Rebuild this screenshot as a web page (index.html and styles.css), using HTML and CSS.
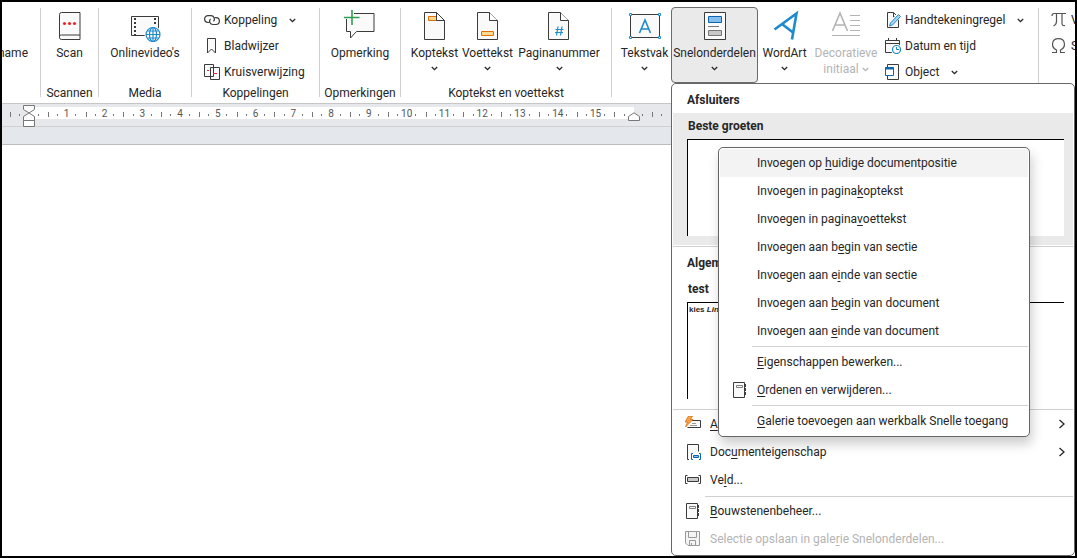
FILE: index.html
```html
<!DOCTYPE html>
<html lang="nl">
<head>
    <meta charset="UTF-8">
    <meta name="viewport" content="width=device-width, initial-scale=1.0">
    <title>Snelonderdelen</title>
    <link rel="stylesheet" href="styles.css">
</head>
<body>
    <svg class="defs" aria-hidden="true">
        <symbol id="chevron" viewBox="0 0 7 5"><path d="M.8 1l2.7 2.7L6.2 1" fill="none" stroke="currentColor" stroke-width="1.3"/></symbol>
        <symbol id="arrow" viewBox="0 0 8 10"><path d="M1.5 1l4.5 4-4.5 4" fill="none" stroke="currentColor" stroke-width="1.3"/></symbol>
        <symbol id="notebook" viewBox="0 0 16 16"><path d="M1.5.5h11v15h-11z" fill="#fafafa" stroke="#3b3b3b"/><path d="M4.500 3.500h6v2h-6z" fill="#fff" stroke="#808080"/><path d="M13.500 2v3M13.500 6v3M13.500 10v3" stroke="#3b3b3b"/></symbol>
    </svg>

    <div class="window">
        <div class="ribbon">
            <div class="group group-cut">
                <div class="tools"><button class="big"><svg class="icon" viewBox="0 0 32 32"><path d="M0 26h5" stroke="#2ea043"/></svg><span>name</span></button></div>
            </div>
            <span class="sep"></span>
            <div class="group group-scan">
                <div class="tools">
                    <button class="big">
                        <svg class="icon" viewBox="0 0 32 32"><path d="M7.500 2.500h18.500v27H7.500a2 2 0 0 1-2-2v-23a2 2 0 0 1 2-2z" fill="#fafafa" stroke="#3b3b3b"/><path d="M5.500 27.500a2 2 0 0 1 2-2.500H26" fill="none" stroke="#3b3b3b"/><g fill="#e8272c"><circle cx="10.500" cy="13.500" r="1.600"/><circle cx="15.500" cy="13.500" r="1.600"/><circle cx="20.500" cy="13.500" r="1.600"/></g></svg>
                        <span>Scan</span>
                    </button>
                </div>
                <div class="caption">Scannen</div>
            </div>
            <span class="sep"></span>
            <div class="group group-media">
                <div class="tools">
                    <button class="big">
                        <svg class="icon" viewBox="0 0 32 32"><path d="M2.500 6.500h27v19h-27z" fill="#fafafa" stroke="#3b3b3b"/><path d="M6 8v17M26 8v7" stroke="#3b3b3b" stroke-width="2" stroke-dasharray="2 2"/><circle cx="24" cy="24.500" r="8.500" fill="#fff"/><g fill="none" stroke="#1e8bcd" stroke-width="1.200"><circle cx="24" cy="24.500" r="7"/><ellipse cx="24" cy="24.500" rx="3.500" ry="7"/><path d="M24 17.500v14M17 24.500h14M18.500 21h11M18.500 28h11"/></g></svg>
                        <span>Onlinevideo's</span>
                    </button>
                </div>
                <div class="caption">Media</div>
            </div>
            <span class="sep"></span>
            <div class="group group-links">
                <div class="tools column">
                    <button class="small">
                        <svg class="icon-sm" viewBox="0 0 16 16"><g fill="none" stroke="#3b3b3b" stroke-width="1.200"><path d="M5.500 10.500H4a3.400 3.400 0 0 1 0-6.800h3a3.400 3.400 0 0 1 2.500 5.700"/><path d="M10.500 5.700H12a3.400 3.400 0 0 1 0 6.800H9a3.400 3.400 0 0 1-2.500-5.700"/></g></svg>
                        <span>Koppeling</span><svg class="chevron"><use href="#chevron"/></svg>
                    </button>
                    <button class="small">
                        <svg class="icon-sm" viewBox="0 0 16 16"><path d="M3.500.5h8v14.500l-4-4-4 4z" fill="#fafafa" stroke="#3b3b3b"/></svg>
                        <span>Bladwijzer</span>
                    </button>
                    <button class="small">
                        <svg class="icon-sm" viewBox="0 0 16 16"><path d="M.5.5h9v12h-9zM6.500 3.500h9v12h-9z" fill="#fafafa" stroke="#3b3b3b"/><path d="M3 6.500h2M9 9.500h4" stroke="#e8272c"/></svg>
                        <span>Kruisverwijzing</span>
                    </button>
                </div>
                <div class="caption">Koppelingen</div>
            </div>
            <span class="sep"></span>
            <div class="group group-comment">
                <div class="tools">
                    <button class="big">
                        <svg class="icon" viewBox="0 0 32 32"><path d="M2.500 3.500h27.500v18H12.500l-6 6.500v-6.500h-4z" fill="#fafafa" stroke="#3b3b3b"/><path d="M0 0h8v9H0zM7 0h3v14H7zM8 6h7v3H8z" fill="#fff"/><path d="M8 0v15M0 7.500h15.500" stroke="#2e9f50" stroke-width="1.600"/></svg>
                        <span>Opmerking</span>
                    </button>
                </div>
                <div class="caption">Opmerkingen</div>
            </div>
            <span class="sep"></span>
            <div class="group group-header">
                <div class="tools">
                    <button class="big">
                        <svg class="icon" viewBox="0 0 32 32"><path d="M5.500 2.500h12l8 8v19h-20z" fill="#fafafa" stroke="#3b3b3b"/><path d="M9.500 6.500h8v4h-8z" fill="#fdd98c" stroke="#dc6f0c"/><path d="M17.500 2.500v8h8z" fill="#fff" stroke="#3b3b3b"/></svg>
                        <span>Koptekst</span><svg class="chevron"><use href="#chevron"/></svg>
                    </button>
                    <button class="big">
                        <svg class="icon" viewBox="0 0 32 32"><path d="M5.500 2.500h12l8 8v19h-20z" fill="#fafafa" stroke="#3b3b3b"/><path d="M17.500 2.500v8h8" fill="#fff" stroke="#3b3b3b"/><path d="M9.500 21.500h12v4h-12z" fill="#fdd98c" stroke="#dc6f0c"/></svg>
                        <span>Voettekst</span><svg class="chevron"><use href="#chevron"/></svg>
                    </button>
                    <button class="big wide">
                        <svg class="icon" viewBox="0 0 32 32"><path d="M5.500 2.500h12l8 8v19h-20z" fill="#fafafa" stroke="#3b3b3b"/><path d="M17.500 2.500v8h8" fill="#fff" stroke="#3b3b3b"/><path d="M15 16.500l-1.500 9M19 16.500l-1.500 9M12.500 19.500h8M12 22.500h8" stroke="#1e8bcd" stroke-width="1.200"/></svg>
                        <span>Paginanummer</span><svg class="chevron"><use href="#chevron"/></svg>
                    </button>
                </div>
                <div class="caption">Koptekst en voettekst</div>
            </div>
            <span class="sep"></span>
            <div class="group group-text">
                <div class="tools">
                    <button class="big">
                        <svg class="icon" viewBox="0 0 32 32"><path d="M1.500 4.500h29v23h-29z" fill="#fafafa" stroke="#3b3b3b"/><path d="M10.500 23L16 10l5.500 13M12.300 19h7.400" fill="none" stroke="#1e8bcd" stroke-width="1.600"/><path d="M.5 3.500h2v2h-2zM29.500 3.500h2v2h-2zM.5 26.500h2v2h-2zM29.500 26.500h2v2h-2z" fill="#fff" stroke="#1e8bcd"/></svg>
                        <span>Tekstvak</span><svg class="chevron"><use href="#chevron"/></svg>
                    </button>
                    <button class="big active" aria-expanded="true">
                        <svg class="icon" viewBox="0 0 32 32"><path d="M5.500 2.500h21v27h-21z" fill="#fafafa" stroke="#3b3b3b"/><path d="M9.500 6.500h13v6h-13z" fill="#83beec" stroke="#0f64ad"/><path d="M9 16.500h11" stroke="#777"/><path d="M9.500 20.500h13v5h-13z" fill="#c8c8c8" stroke="#777"/></svg>
                        <span>Snelonderdelen</span><svg class="chevron"><use href="#chevron"/></svg>
                    </button>
                    <button class="big">
                        <svg class="icon" viewBox="0 0 32 32"><path d="M5.500 19.500L27.500 3.500l-4.500 26M13 14l11 8.500" fill="none" stroke="#1e8bcd" stroke-width="2.600"/></svg>
                        <span>WordArt</span><svg class="chevron"><use href="#chevron"/></svg>
                    </button>
                    <button class="big initial" disabled>
                        <svg class="icon" viewBox="0 0 32 32"><path d="M2.500 21L10 3l7.500 18M5 15h10" fill="none" stroke="#b4b4b4" stroke-width="1.600"/><path d="M20 5.500h10M20 10.500h10M20 15.500h10M20 20.500h10M2 25.500h28" stroke="#b4b4b4"/></svg>
                        <span>Decoratieve<br>initiaal <svg class="chevron"><use href="#chevron"/></svg></span>
                    </button>
                    <div class="column">
                        <button class="small">
                            <svg class="icon-sm" viewBox="0 0 16 16"><path d="M2.500.5h6l5 5v10h-11z" fill="#fafafa" stroke="#3b3b3b"/><path d="M8.500.5v4.500h4" fill="none" stroke="#3b3b3b"/><path d="M14.500 3L6 12.500" stroke="#fff" stroke-width="5"/><path d="M13.500 2.500l2 2-8 8.500-3 1 1-3z" fill="#a9d5f3" stroke="#1e8bcd"/></svg>
                            <span>Handtekeningregel</span><svg class="chevron"><use href="#chevron"/></svg>
                        </button>
                        <button class="small">
                            <svg class="icon-sm" viewBox="0 0 16 16"><path d="M.5 2.500h14v12H.5z" fill="#fafafa" stroke="#3b3b3b"/><path d="M.5 5.500h14M3.500 0v3M11.500 0v3" stroke="#3b3b3b"/><circle cx="11.500" cy="11.500" r="5.500" fill="#fff"/><circle cx="11.500" cy="11.500" r="4" fill="#fff" stroke="#1e8bcd" stroke-width="1.200"/><path d="M11.500 9v2.500H14" fill="none" stroke="#1e8bcd"/></svg>
                            <span>Datum en tijd</span>
                        </button>
                        <button class="small">
                            <svg class="icon-sm" viewBox="0 0 16 16"><path d="M2.500.5h11v15h-11z" fill="#fafafa" stroke="#3b3b3b"/><path d="M.5 3.500h8v8h-8z" fill="#fff" stroke="#0f64ad"/><path d="M0 4.500h9" stroke="#0f64ad" stroke-width="2"/></svg>
                            <span>Object</span><svg class="chevron"><use href="#chevron"/></svg>
                        </button>
                    </div>
                </div>
            </div>
            <span class="sep"></span>
            <div class="group group-symbols">
                <div class="tools column">
                    <button class="small">
                        <svg class="icon-sm" viewBox="0 0 16 16"><path d="M1 4q0-2.500 2-2.500h12M5.500 1.500v8q0 3-3 4.500M11 1.500v10q0 2.500 3 2" fill="none" stroke="#555" stroke-width="1.200"/></svg>
                        <span>Vergelijking</span>
                    </button>
                    <button class="small">
                        <svg class="icon-sm" viewBox="0 0 16 16"><path d="M1 14.500h4.500v-2.500C-.5 9 .5 .700 7.500 .700S15.500 9 9.500 12v2.500H14" fill="none" stroke="#555" stroke-width="1.200"/></svg>
                        <span>Symbool</span>
                    </button>
                </div>
            </div>
        </div>

        <div class="ruler-bar">
            <ol class="ruler">
                <li></li><li>1</li><li>2</li><li>3</li><li>4</li><li>5</li><li>6</li><li>7</li><li>8</li>
                <li>9</li><li>10</li><li>11</li><li>12</li><li>13</li><li>14</li><li>15</li><li></li><li></li>
            </ol>
            <svg class="indent indent-left" viewBox="0 0 12 22"><g fill="#fff" stroke="#777"><path d="M.5.5h11v4l-5.500 3.500L.5 4.500z"/><path d="M.5 15.500v-4L6 8l5.500 3.500v4zM.5 15.500h11v6H.5z"/></g></svg>
            <svg class="indent indent-right" viewBox="0 0 12 9"><path d="M.5 8.500v-4L6 .8l5.500 3.700v4z" fill="#fff" stroke="#777"/></svg>
        </div>
        <div class="page-gap"></div>
        <main class="page"></main>

        <div class="gallery">
            <h2>Afsluiters</h2>
            <div class="block selected">
                <h3>Beste groeten</h3>
                <div class="preview"></div>
            </div>
            <h2 class="ruled">Algemeen</h2>
            <div class="block">
                <h3>test</h3>
                <div class="preview">kies <i>Lin</i></div>
            </div>
            <div class="commands">
                <button>
                    <svg class="icon-sm" viewBox="0 0 16 16"><path d="M6.500 4.500h9v7h-13" fill="#fafafa" stroke="#3b3b3b"/><path d="M7 7.500h4M5 9.500h7" stroke="#999"/><path d="M3.500 0h4L5.500 3.500H8L.5 11l2-5H0z" fill="#f5a04c" stroke="#dc6f0c" stroke-width=".8"/></svg>
                    <span><u>A</u>utoTekst</span><svg class="arrow"><use href="#arrow"/></svg>
                </button>
                <button>
                    <svg class="icon-sm" viewBox="0 0 16 16"><path d="M4 15.500H2.500V.5h11v7" fill="#fafafa" stroke="#3b3b3b"/><path d="M8 9.500H6.500v6H8M14 9.500h1.500v6H14" fill="none" stroke="#0f64ad"/><path d="M8.500 11.500h5v2h-5z" fill="#83beec" stroke="#0f64ad"/></svg>
                    <span>Doc<u>u</u>menteigenschap</span><svg class="arrow"><use href="#arrow"/></svg>
                </button>
                <button>
                    <svg class="icon-sm" viewBox="0 0 16 16"><path d="M2.500 3.500h-2v8h2M13.500 3.500h2v8h-2" fill="none" stroke="#3b3b3b"/><path d="M2.500 5.500h11v4h-11z" fill="#c8c8c8" stroke="#3b3b3b"/></svg>
                    <span>Ve<u>l</u>d...</span>
                </button>
                <hr>
                <button>
                    <svg class="icon-sm"><use href="#notebook"/></svg>
                    <span><u>B</u>ouwstenenbeheer...</span>
                </button>
                <button disabled>
                    <svg class="icon-sm" viewBox="0 0 16 16"><path d="M.5.5h14v14H3l-2.500-2.500z" fill="#f4f4f4" stroke="#999"/><path d="M3.500.5v6h8v-6M4.500 14.500v-5h6v5M6.500 12v2.500" fill="none" stroke="#999"/></svg>
                    <span>Selectie opslaan in gale<u>r</u>ie Snelonderdelen...</span>
                </button>
            </div>
        </div>

        <div class="context-menu">
            <button class="hover"><span>Invoegen op <u>h</u>uidige documentpositie</span></button>
            <button><span>Invoegen in pagina<u>k</u>optekst</span></button>
            <button><span>Invoegen in pagina<u>v</u>oettekst</span></button>
            <button><span>Invoegen aan b<u>e</u>gin van sectie</span></button>
            <button><span>Invoegen aan e<u>i</u>nde van sectie</span></button>
            <button><span>Invoegen aan <u>b</u>egin van document</span></button>
            <button><span>Invoegen aan <u>e</u>inde van document</span></button>
            <hr>
            <button><span><u>E</u>igenschappen bewerken...</span></button>
            <button><svg class="icon-sm"><use href="#notebook"/></svg><span><u>O</u>rdenen en verwijderen...</span></button>
            <hr>
            <button><span><u>G</u>alerie toevoegen aan werkbalk Snelle toegang</span></button>
        </div>
    </div>
</body>
</html>
```
FILE: styles.css
```css
* { box-sizing: border-box; }
body { margin: 0; font: 12px/16px Roboto, "Open Sans", sans-serif; color: #262626; }
button { font: inherit; color: inherit; background: none; border: 0; padding: 0; margin: 0; white-space: nowrap; text-align: left; cursor: pointer; }
button:disabled { color: #b4b4b4; cursor: default; }
h2, h3 { margin: 0; font-size: 12px; line-height: 16px; font-weight: 700; }
u { text-underline-offset: 2px; text-decoration-skip-ink: none; }
svg { flex: none; display: block; }

.defs { position: absolute; width: 0; height: 0; }
.window { position: relative; display: flex; flex-direction: column; min-height: 100vh; border: 2px solid #000; overflow: hidden; background: #fff; }

/* ribbon */
.ribbon { display: flex; height: 102px; padding-top: 5px; border-bottom: 1px solid #c6c6c6; overflow: hidden; }
.sep { flex: none; width: 1px; height: 89px; margin-top: 1px; background: #d0d0d0; }
.group { display: flex; flex: none; flex-direction: column; }
.group-cut { width: 38px; align-items: flex-end; padding-right: 10px; overflow: hidden; }
.group-scan { width: 57px; }
.group-media { width: 92px; }
.group-links { width: 127px; }
.group-comment { width: 80px; }
.group-header { width: 210px; }
.group-text { width: 426px; }
.group-symbols { flex: 1; width: 0; }
.tools { display: flex; justify-content: center; height: 78px; }
.column { display: flex; flex-direction: column; justify-content: flex-start; }
.caption { text-align: center; line-height: 16px; white-space: nowrap; }
.icon { width: 32px; height: 32px; margin-bottom: 3px; }
.icon-sm { width: 16px; height: 16px; }
.chevron { width: 7px; height: 5px; }
.arrow { width: 8px; height: 10px; margin-left: auto; }

.big { display: flex; flex-direction: column; align-items: center; height: 76px; padding: 2px 0; border: 1px solid transparent; border-radius: 4px; text-align: center; }
.big > .chevron { margin-top: 5px; }
.active { background: #eaeaea; border-color: #6b6b6b; }
.small { display: flex; align-items: center; gap: 4px; height: 26px; }
.small .chevron { margin-left: 8px; }
.group-links .column { padding-left: 12px; }
.group-header .big { width: 53px; }
.group-header .wide { width: 90px; }
.group-header .tools { justify-content: flex-start; padding-left: 7px; }
.group-text .tools { justify-content: flex-start; padding-left: 6px; }
.group-text .big { width: 53px; }
.group-text .active { width: 87px; }
.group-text .initial { width: 70px; }
.initial .chevron { display: inline-block; vertical-align: middle; }
.group-text .column { padding-left: 4px; }
.group-symbols .column { padding-left: 12px; }

/* ruler */
.ruler-bar { position: relative; height: 23px; background: #e6e8ec; border-bottom: 1px solid #d0d0d0; }
.ruler { display: grid; grid-template-columns: repeat(18, 1fr); width: 680px; margin: 0; padding: 3px 0 0 8px; box-sizing: content-box; list-style: none; background: linear-gradient(#fff, #fff) 27px 3px / 605px 12px no-repeat; }
.ruler li { height: 12px; font-size: 10px; line-height: 14px; text-align: center; color: #555; background: linear-gradient(#777, #777) 0 5px / 1px 5px no-repeat, linear-gradient(#777, #777) 25% 7px / 1px 2px no-repeat, linear-gradient(#777, #777) 75% 7px / 1px 2px no-repeat; }
.indent { position: absolute; width: 12px; }
.indent-left { left: 21px; top: 1px; height: 22px; }
.indent-right { left: 626px; top: 8px; height: 9px; }
.page-gap { height: 18px; background: #e4e7ec; border-bottom: 1px solid #bdbdbd; }
.page { flex: 1; }

/* quick parts gallery */
.gallery { position: absolute; top: 81px; right: 0; width: 404px; padding: 1px 1px 2px; background: #fff; border: 1px solid #666; border-radius: 5px; }
.gallery h2 { padding: 7px 14px 5px; }
.gallery .ruled { border-top: 1px solid #d0d0d0; margin-top: 1px; padding: 8px 14px 5px; }
.block { padding: 5px 9px 9px 14px; }
.block.selected { background: #eaeaea; }
.block h3 { padding: 0 1px 5px; }
.preview { height: 97px; padding: 2px 1px; overflow: hidden; background: #fff; border: solid #000; border-width: 1px 0 0 1px; font: bold 8px/10px "Liberation Sans", Arial, sans-serif; white-space: nowrap; }
.commands { border-top: 1px solid #d0d0d0; margin-top: 1px; }
.commands button, .context-menu button { display: flex; align-items: center; width: 100%; height: 28px; }
.commands button { gap: 9px; padding: 0 7px 0 12px; }
hr { height: 1px; margin: 1px 0; border: 0; background: #d0d0d0; }
.commands hr { margin: 2px 0 0 32px; }

.context-menu { position: absolute; top: 145px; right: 45px; width: 312px; padding: 1px; background: #fff; border: 1px solid #666; border-radius: 5px; box-shadow: 2px 7px 12px rgba(0, 0, 0, .2); }
.context-menu button { padding-left: 37px; }
.context-menu .icon-sm { margin: 0 9px 0 -25px; }
.context-menu .hover { background: #f3f3f3; }
.context-menu hr { margin-left: 32px; }
```
